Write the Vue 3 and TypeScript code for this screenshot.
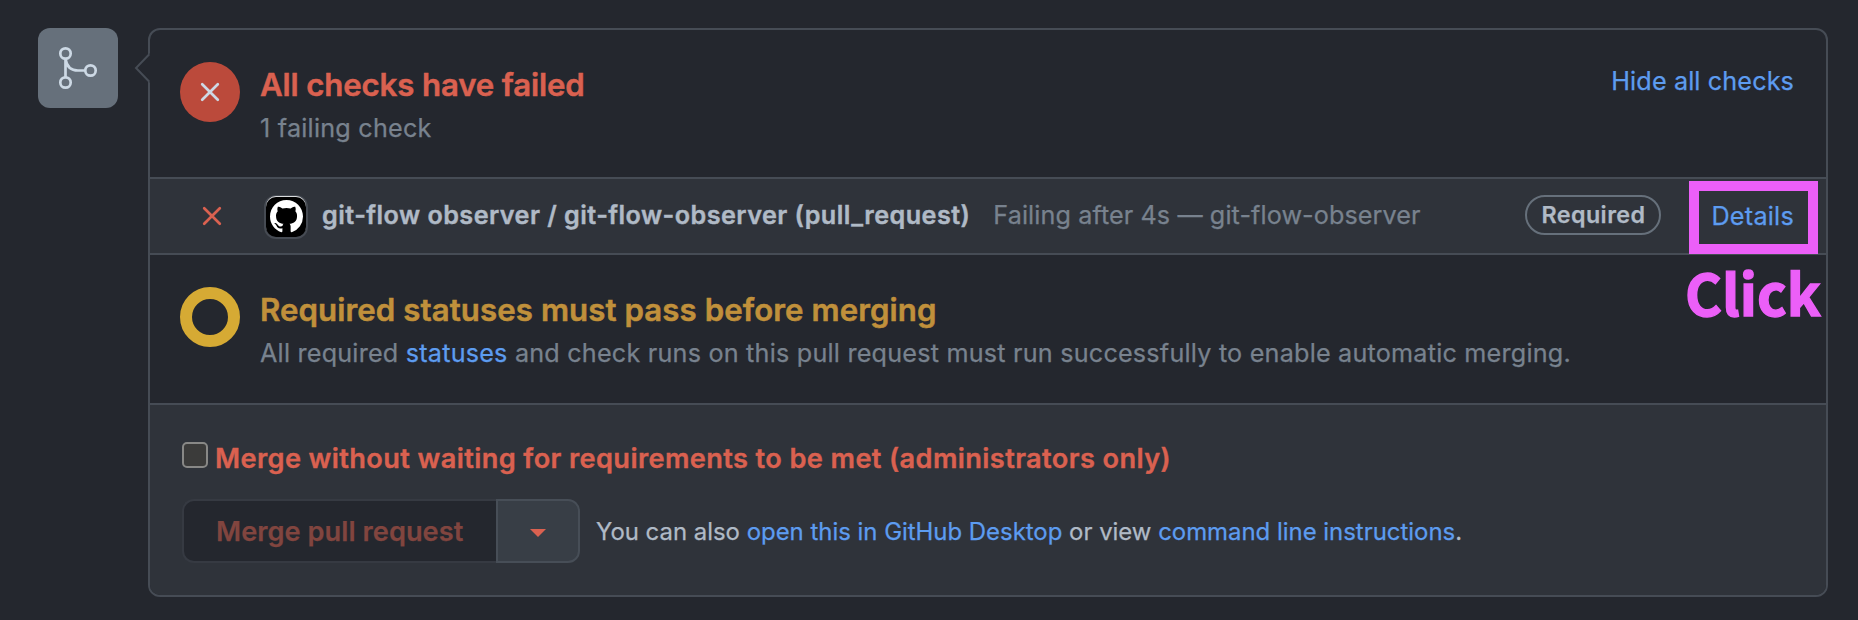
<script setup lang="ts">
interface CheckRun {
  name: string
  summary: string
  required: boolean
}

const checks: CheckRun[] = [
  {
    name: 'git-flow observer / git-flow-observer (pull_request)',
    summary: 'Failing after 4s — git-flow-observer',
    required: true,
  },
]
</script>

<template>
  <main class="page">
    <div class="badge">
      <svg width="80" height="80" viewBox="0 0 80 80" fill="none" stroke="currentColor" stroke-width="2.7">
        <circle cx="27.5" cy="25.5" r="5.2" />
        <circle cx="27.5" cy="54.5" r="5.2" />
        <circle cx="52.5" cy="42.5" r="5.2" />
        <path d="M27.5 30.7V49.3M27.5 31C28.6 38 33 42.5 40 42.5H47.3" />
      </svg>
    </div>

    <section class="card">
      <svg class="pointer" width="17" height="30" viewBox="0 0 17 30">
        <path class="pointer-fill" d="M16 0L15.5 1L2 15L15.5 29L16 30Z" />
        <path class="pointer-line" d="M15.3 1.2L2 15L15.3 28.8" />
      </svg>

      <header class="status">
        <span class="state failed">
          <svg width="22" height="22" viewBox="0 0 22 22"><path d="M3.2 3.2L18.8 18.8M18.8 3.2L3.2 18.8" /></svg>
        </span>
        <div class="copy">
          <h3 class="title danger">All checks have failed</h3>
          <p class="sub count">1 failing check</p>
        </div>
        <a class="link toggle">Hide all checks</a>
      </header>

      <div v-for="check in checks" :key="check.name" class="check">
        <svg class="cross" width="22" height="22" viewBox="0 0 22 22"><path d="M3.2 3.2L18.8 18.8M18.8 3.2L3.2 18.8" /></svg>
        <span class="avatar">
          <svg width="33" height="33" viewBox="0 0 16 16">
            <path fill="#fff" d="M8 0C3.58 0 0 3.58 0 8c0 3.54 2.29 6.53 5.47 7.59.4.07.55-.17.55-.38 0-.19-.01-.82-.01-1.49-2.01.37-2.53-.49-2.69-.94-.09-.23-.48-.94-.82-1.13-.28-.15-.68-.52-.01-.53.63-.01 1.08.58 1.23.82.72 1.21 1.87.87 2.33.66.07-.52.28-.87.51-1.07-1.78-.2-3.64-.89-3.64-3.95 0-.87.31-1.59.82-2.15-.08-.2-.36-1.02.08-2.12 0 0 .67-.21 2.2.82.64-.18 1.32-.27 2-.27s1.36.09 2 .27c1.53-1.04 2.2-.82 2.2-.82.44 1.1.16 1.92.08 2.12.51.56.82 1.27.82 2.15 0 3.07-1.87 3.75-3.65 3.95.29.25.54.73.54 1.48 0 1.07-.01 1.93-.01 2.2 0 .21.15.46.55.38A8.01 8.01 0 0 0 16 8c0-4.42-3.58-8-8-8Z" />
          </svg>
        </span>
        <strong class="name">{{ check.name }}</strong>
        <span class="summary">{{ check.summary }}</span>
        <span v-if="check.required" class="pill">Required</span>
        <a class="link details">Details</a>
        <span class="highlight"></span>
        <span class="callout">Click</span>
      </div>

      <div class="status">
        <span class="state pending"></span>
        <div class="copy">
          <h3 class="title attention">Required statuses must pass before merging</h3>
          <p class="sub">All required <a class="link">statuses</a> and check runs on this pull request must run successfully to enable automatic merging.</p>
        </div>
      </div>

      <footer class="merge">
        <label class="override">
          <span class="box"></span>
          <span>Merge without waiting for requirements to be met (administrators only)</span>
        </label>
        <div class="actions">
          <button class="main" disabled>Merge pull request</button>
          <button class="menu" aria-label="Select merge method">
            <svg width="16" height="8" viewBox="0 0 16 8"><path d="M0 0H16L8 8Z" fill="currentColor" /></svg>
          </button>
          <p class="hint">You can also <a class="link">open this in GitHub Desktop</a> or view <a class="link">command line instructions</a>.</p>
        </div>
      </footer>
    </section>
  </main>
</template>

<style>
body {
  margin: 0;
  background: #24272e;
}
</style>

<style scoped>
.page {
  box-sizing: border-box;
  display: flex;
  align-items: flex-start;
  gap: 30px;
  width: 1858px;
  height: 620px;
  padding: 28px 30px 0 38px;
  background: #24272e;
  color: #b0bac6;
  font-family: Inter, 'Liberation Sans', sans-serif;
  font-size: 25.2px;
  line-height: 40px;
  white-space: nowrap;
  -webkit-text-stroke: 0.25px currentColor;
}
h3,
p {
  margin: 0;
}
svg {
  display: block;
}
.link {
  color: #5d9cf0;
}
.badge {
  flex: none;
  width: 80px;
  height: 80px;
  border-radius: 12px;
  background: #66707b;
  color: #cdd9e5;
}
.card {
  position: relative;
  box-sizing: border-box;
  width: 1680px;
  height: 569px;
  border: 2px solid #464c55;
  border-radius: 12px;
}
.pointer {
  position: absolute;
  left: -16px;
  top: 23px;
}
.pointer-fill {
  fill: #24272e;
}
.pointer-line {
  fill: none;
  stroke: #464c55;
  stroke-width: 2;
}
.status {
  box-sizing: border-box;
  display: flex;
  align-items: flex-start;
  height: 149px;
  padding: 32px 32px 0 30px;
  border-bottom: 2px solid #464c55;
}
.status + .check + .status {
  height: 150px;
}
.state {
  flex: none;
  box-sizing: border-box;
  display: flex;
  align-items: center;
  justify-content: center;
  width: 60px;
  height: 60px;
  margin-right: 20px;
  border-radius: 50%;
}
.failed {
  background: #bb4a3b;
}
.failed path,
.cross path {
  fill: none;
  stroke: #cdd9e5;
  stroke-width: 2.7;
  stroke-linecap: round;
}
.cross path {
  stroke: #da6150;
}
.pending {
  border: 12px solid #d6aa34;
}
.copy {
  flex: 1;
  padding-top: 2px;
}
.title {
  font-size: 31.2px;
  line-height: 42px;
  font-weight: 600;
  -webkit-text-stroke-width: 0.5px;
}
.danger {
  color: #da6150;
  letter-spacing: -0.14px;
}
.attention {
  color: #c0903b;
  letter-spacing: 0.08px;
}
.sub {
  margin-top: 2px;
  color: #78828e;
  letter-spacing: 0.206px;
}
.count {
  letter-spacing: 0.22px;
}
.toggle {
  margin-top: -1px;
  letter-spacing: 0.12px;
}
.check {
  position: relative;
  box-sizing: border-box;
  display: flex;
  align-items: center;
  height: 76px;
  padding: 0 32px 0 51px;
  border-bottom: 2px solid #464c55;
  background: #2f333a;
}
.cross {
  margin-right: 43px;
}
.avatar {
  box-sizing: border-box;
  width: 40px;
  height: 40px;
  margin: 2px 16px 0 0;
  padding: 3px 0 0 4px;
  border-radius: 10px;
  background: #000;
  box-shadow: 0 -1px 0 #d9dbdd, 0 0 0 2px #464b53;
}
.name {
  margin-top: -2px;
  font-weight: 600;
  letter-spacing: 0.451px;
  -webkit-text-stroke-width: 0.4px;
}
.summary {
  margin: -2px auto 0 23px;
  color: #78828e;
  letter-spacing: 0.085px;
}
.pill {
  box-sizing: border-box;
  width: 136px;
  height: 40px;
  margin: -2px 50px 0 0;
  border: 2px solid #66707b;
  border-radius: 20px;
  font-size: 23.3px;
  font-weight: 600;
  line-height: 36px;
  text-align: center;
  letter-spacing: 0.416px;
}
.details {
  letter-spacing: 0.239px;
}
.highlight {
  position: absolute;
  left: 1539px;
  top: 2px;
  box-sizing: border-box;
  width: 129px;
  height: 73px;
  border: 10px solid #ec5ff8;
}
.callout {
  position: absolute;
  left: 1535px;
  top: 71px;
  color: #ec5ff8;
  font-family: 'Noto Sans CJK JP', sans-serif;
  font-size: 56.5px;
  font-weight: 700;
  line-height: 82px;
  -webkit-text-stroke-width: 1.4px;
}
.merge {
  box-sizing: border-box;
  height: 190px;
  padding: 32px 32px 0;
  border-radius: 0 0 10px 10px;
  background: #2f333a;
}
.override {
  display: flex;
  align-items: center;
  gap: 7px;
  padding-top: 1px;
  color: #da6150;
  font-size: 27.2px;
  font-weight: 600;
  line-height: 42px;
  letter-spacing: 0.385px;
  -webkit-text-stroke-width: 0.4px;
}
.box {
  box-sizing: border-box;
  width: 26px;
  height: 26px;
  margin-top: -8px;
  border: 2px solid #888886;
  border-radius: 5px;
  background: #3b3b3a;
}
.actions {
  display: flex;
  align-items: center;
  margin-top: 19px;
}
.main,
.menu {
  box-sizing: border-box;
  height: 64px;
  padding: 0;
  font: 600 27.2px/60px Inter, 'Liberation Sans', sans-serif;
}
.main {
  width: 314px;
  padding: 1px 0 0 32px;
  border: 2px solid #363a42;
  border-right: 0;
  border-radius: 12px 0 0 12px;
  background: #24272e;
  color: #81453f;
  text-align: left;
  letter-spacing: 0.05px;
}
.menu {
  display: flex;
  align-items: center;
  justify-content: center;
  width: 84px;
  border: 2px solid #474e57;
  border-radius: 0 12px 12px 0;
  background: #383e46;
  color: #da6150;
}
.menu svg {
  margin-top: 4px;
}
.hint {
  margin: 2px 0 0 16px;
  font-size: 23.95px;
  letter-spacing: -0.015px;
}
</style>
